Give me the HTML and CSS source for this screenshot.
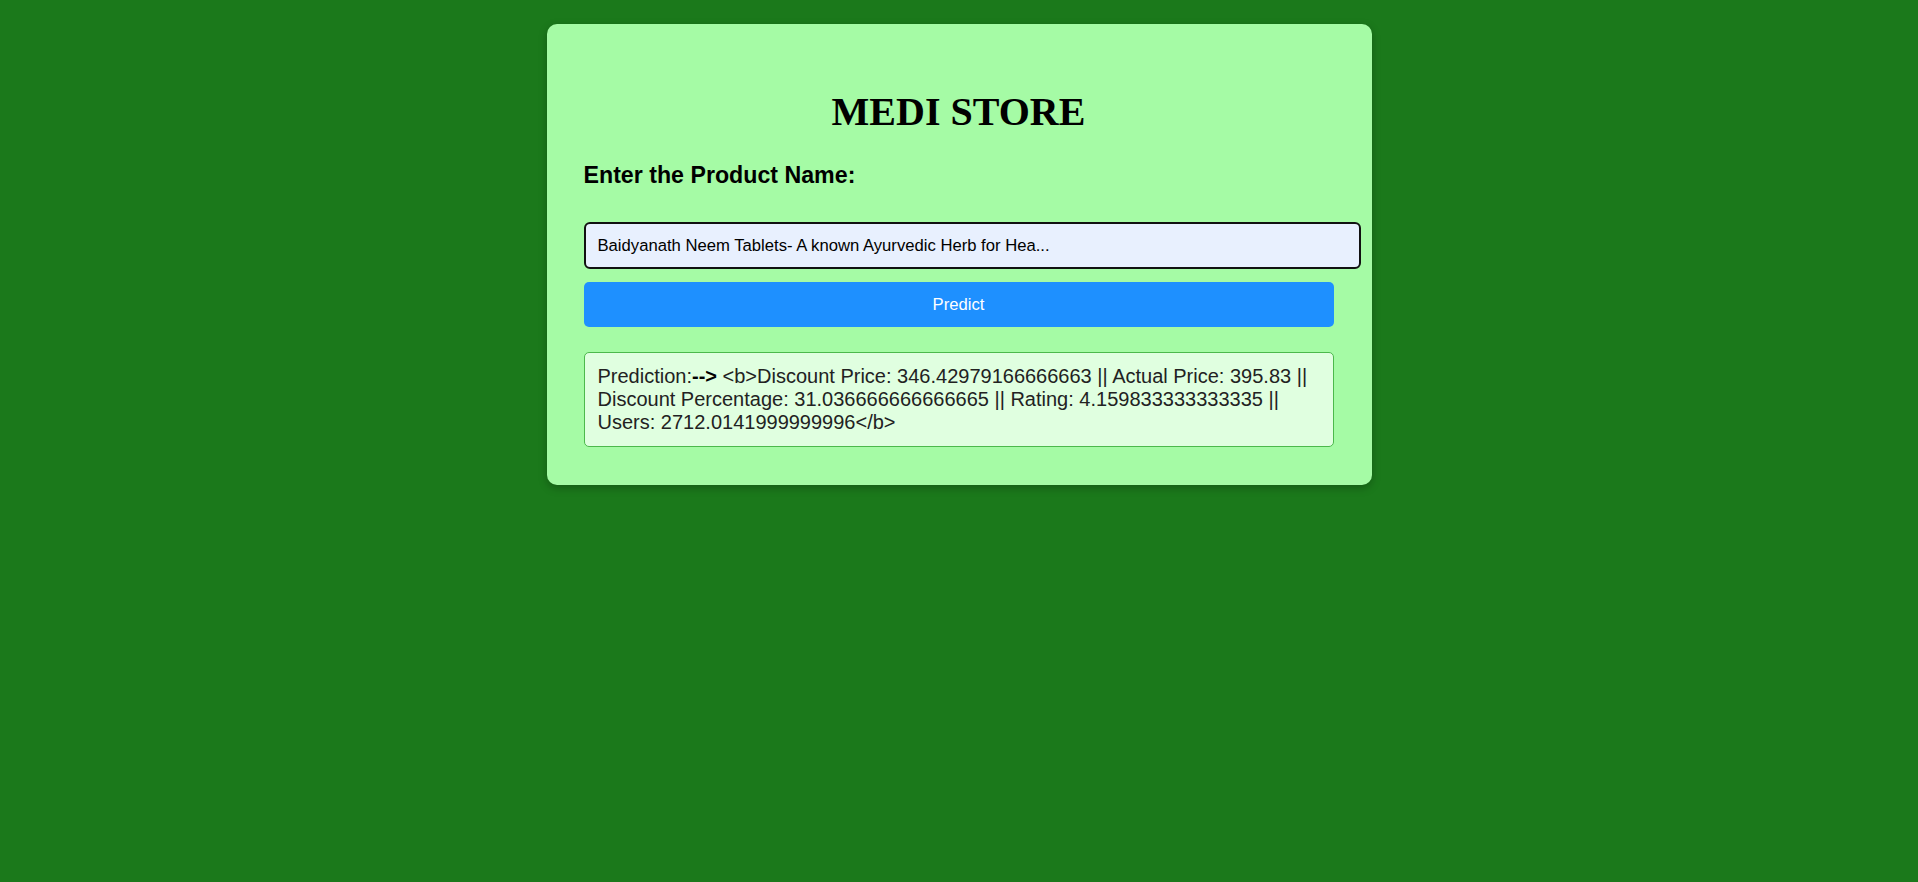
FILE: index.html
```html
<!DOCTYPE html>
<html lang="en">
<head>
<meta charset="utf-8">
<title>Medi Store</title>
<link rel="stylesheet" href="styles.css">
</head>
<body>
  <main class="card">
    <h1 class="title">MEDI STORE</h1>
    <form class="form">
      <label class="label" for="product">Enter the Product Name:</label>
      <input class="field" id="product" type="text" spellcheck="false" value="Baidyanath Neem Tablets- A known Ayurvedic Herb for Hea...">
      <button class="btn" type="button">Predict</button>
    </form>
    <div class="result">Prediction:<b class="arrow">--&gt;</b> &lt;b&gt;Discount Price: 346.42979166666663 || Actual Price: 395.83 || Discount Percentage: 31.036666666666665 || Rating: 4.159833333333335 || Users: 2712.0141999999996&lt;/b&gt;</div>
  </main>
</body>
</html>
```
FILE: styles.css
```css
html, body {
  margin: 0;
  padding: 0;
}
body {
  background: #1b791b;
  font-family: "Liberation Sans", Arial, sans-serif;
  padding-top: 24px;
  min-height: 858px;
}
.card {
  width: 750px;
  margin: 0 auto;
  padding: 37px 38px 38px 37px;
  background: #a5fba5;
  border-radius: 10px;
  box-shadow: 0 3px 8px rgba(0, 0, 0, 0.25);
}
.title {
  font-family: "Liberation Serif", "Times New Roman", serif;
  font-size: 40px;
  font-weight: bold;
  text-align: center;
  margin: 27px 0 27px;
  color: #000;
}
.form {
  display: flex;
  flex-direction: column;
  align-items: flex-start;
}
.label {
  display: block;
  font-size: 23.2px;
  font-weight: bold;
  color: #000;
  margin: 0 0 33px;
}
.field {
  box-sizing: content-box;
  width: 749px;
  height: 19px;
  margin: 0;
  padding: 12px;
  font-family: "Liberation Sans", Arial, sans-serif;
  font-size: 16.67px;
  line-height: 19px;
  color: #000;
  background: #e8f0fe;
  border: 2px solid #111;
  border-radius: 6px;
  outline: none;
}
.btn {
  width: 750px;
  height: 45px;
  margin-top: 13px;
  border: none;
  border-radius: 5px;
  background: #1e90ff;
  color: #fff;
  font-family: "Liberation Sans", Arial, sans-serif;
  font-size: 16.67px;
  cursor: pointer;
}
.result {
  margin-top: 25px;
  padding: 12px 13px;
  background: #e0ffe0;
  border: 1px solid #4cb94c;
  border-radius: 5px;
  font-size: 20px;
  line-height: 23px;
  color: #222;
}
.arrow {
  font-weight: bold;
  color: #000;
}
```
